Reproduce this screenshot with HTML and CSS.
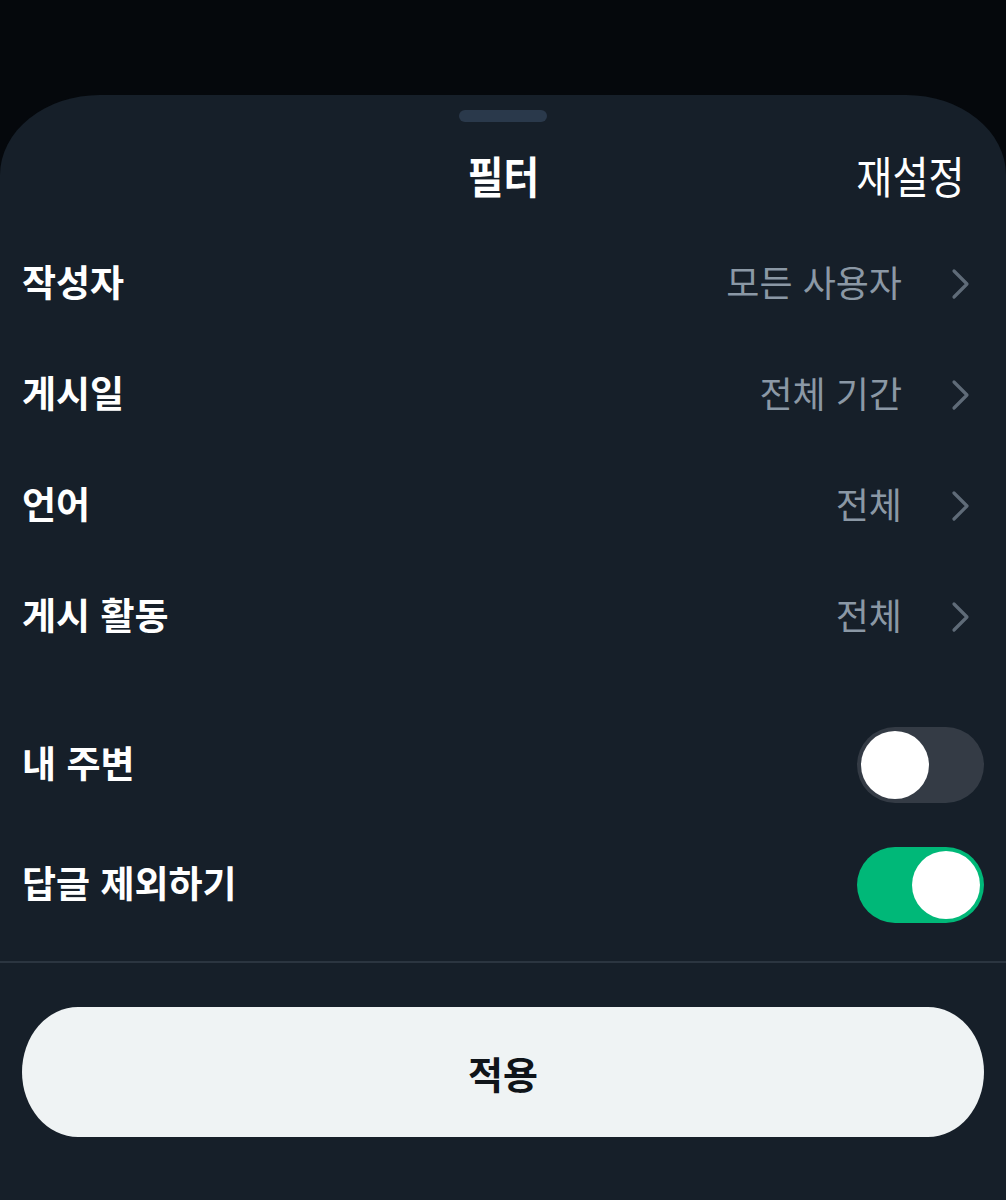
FILE: index.html
```html
<!DOCTYPE html>
<html lang="ko">
<head>
<meta charset="utf-8">
<link rel="stylesheet" href="styles.css">
</head>
<body>
<div class="screen">
  <div class="sheet">
    <div class="handle"></div>
    <div class="header">
      <div class="title">필터</div>
      <div class="reset">재설정</div>
    </div>
    <div class="list">
      <div class="row"><span class="label">작성자</span><span class="value">모든 사용자</span><svg class="chev" viewBox="0 0 22 32"><path d="M4 3 L17 16 L4 29" fill="none" stroke="#5f6b78" stroke-width="3.2" stroke-linecap="round" stroke-linejoin="round"/></svg></div>
      <div class="row"><span class="label">게시일</span><span class="value">전체 기간</span><svg class="chev" viewBox="0 0 22 32"><path d="M4 3 L17 16 L4 29" fill="none" stroke="#5f6b78" stroke-width="3.2" stroke-linecap="round" stroke-linejoin="round"/></svg></div>
      <div class="row"><span class="label">언어</span><span class="value">전체</span><svg class="chev" viewBox="0 0 22 32"><path d="M4 3 L17 16 L4 29" fill="none" stroke="#5f6b78" stroke-width="3.2" stroke-linecap="round" stroke-linejoin="round"/></svg></div>
      <div class="row"><span class="label">게시 활동</span><span class="value">전체</span><svg class="chev" viewBox="0 0 22 32"><path d="M4 3 L17 16 L4 29" fill="none" stroke="#5f6b78" stroke-width="3.2" stroke-linecap="round" stroke-linejoin="round"/></svg></div>
    </div>
    <div class="toggles">
      <div class="trow"><span class="label">내 주변</span><div class="switch off"><div class="knob"></div></div></div>
      <div class="trow"><span class="label">답글 제외하기</span><div class="switch on"><div class="knob"></div></div></div>
    </div>
    <div class="divider"></div>
    <div class="footer">
      <div class="apply">적용</div>
    </div>
  </div>
</div>
</body>
</html>
```
FILE: styles.css
```css
* { box-sizing: border-box; }
html, body { margin: 0; padding: 0; }
body {
  background: #05080c;
  font-family: "Noto Sans CJK KR", "Noto Sans", sans-serif;
  color: #ffffff;
}
.screen {
  width: 1006px;
  height: 1200px;
  padding-top: 95px;
  overflow: hidden;
}
.sheet {
  background: #161f29;
  height: 1105px;
  border-radius: 100px 100px 0 0 / 80px 80px 0 0;
  padding-top: 15px;
  display: flex;
  flex-direction: column;
}
.handle {
  width: 88px;
  height: 12px;
  border-radius: 6px;
  background: #2a394b;
  align-self: center;
}
.header {
  height: 106px;
  display: grid;
  grid-template-columns: 1fr auto 1fr;
  align-items: center;
  padding: 0 42px 0 42px;
}
.title {
  grid-column: 2;
  font-size: 44px;
  font-weight: 700;
  transform: scaleX(0.88);
  line-height: 1;
}
.reset {
  grid-column: 3;
  justify-self: end;
  font-size: 44px;
  font-weight: 400;
  line-height: 1;
  transform: scaleX(0.89);
  transform-origin: right center;
}
.list { display: flex; flex-direction: column; }
.row {
  height: 111px;
  display: flex;
  align-items: center;
  padding: 0 34px 0 22px;
}
.label {
  font-size: 37px;
  font-weight: 700;
  flex: 1;
  line-height: 1;
  margin-top: -5px;
}
.value {
  font-size: 36px;
  color: #8b98a5;
  line-height: 1;
  margin-top: -5px;
  margin-right: 48px;
}
.chev { width: 22px; height: 32px; margin-top: 0; }
.toggles {
  margin-top: 33px;
  display: flex;
  flex-direction: column;
}
.trow {
  height: 120px;
  display: flex;
  align-items: center;
  padding: 0 22px;
}
.switch {
  width: 127px;
  height: 76px;
  border-radius: 38px;
  padding: 4px;
  display: flex;
  align-items: center;
}
.switch.off { background: #343b45; justify-content: flex-start; }
.switch.on { background: #00b878; justify-content: flex-end; }
.knob {
  width: 68px;
  height: 68px;
  border-radius: 50%;
  background: #ffffff;
}
.divider {
  margin-top: 16px;
  height: 2px;
  background: #2b3540;
}
.footer {
  padding: 44px 22px 0;
}
.apply {
  height: 130px;
  background: #eff3f4;
  border-radius: 56px / 65px;
  display: flex;
  align-items: center;
  justify-content: center;
  color: #0f1419;
  font-size: 38px;
  font-weight: 700;
}
```
